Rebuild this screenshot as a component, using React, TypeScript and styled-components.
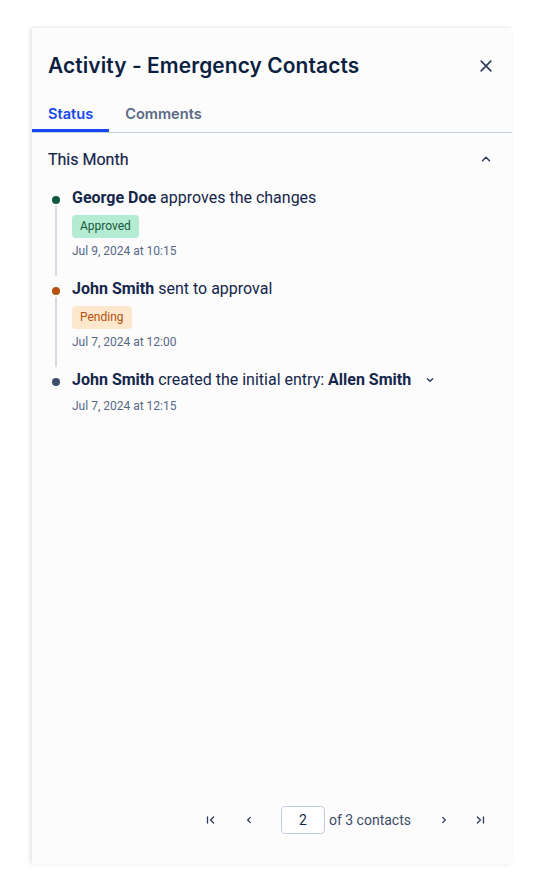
import React from "react";
import styled, { createGlobalStyle } from "styled-components";

const Global = createGlobalStyle`
  html, body { margin: 0; padding: 0; background: #ffffff; }
  body { font-family: Roboto, "Liberation Sans", sans-serif; -webkit-font-smoothing: antialiased; }
  * { box-sizing: border-box; }
`;

const Page = styled.div`
  width: 536px;
  height: 888px;
  padding: 28px 24px 24px 32px;
  background: #ffffff;
`;

const Panel = styled.aside`
  height: 100%;
  background: #fcfcfd;
  box-shadow: -2px 0 4px rgba(16, 24, 40, 0.1), 0 -1px 2px rgba(16, 24, 40, 0.04);
  display: flex;
  flex-direction: column;
`;

const Header = styled.header`
  display: flex;
  align-items: center;
  justify-content: space-between;
  padding: 16px 10px 0 16px;
  height: 60px;
`;

const Title = styled.h1`
  margin: 0;
  font-family: Inter, "Noto Sans", sans-serif;
  font-weight: 600;
  font-size: 20.9px;
  line-height: 32px;
  color: #0c1f40;
  letter-spacing: 0.1px;
`;

const IconButton = styled.button<{ $size?: number }>`
  width: ${(p) => p.$size ?? 24}px;
  height: ${(p) => p.$size ?? 24}px;
  padding: 0;
  border: none;
  background: transparent;
  color: #2b3c5a;
  display: inline-flex;
  align-items: center;
  justify-content: center;
  cursor: pointer;
  flex: none;
`;

const Tabs = styled.nav`
  display: flex;
  margin-top: 8px;
  border-bottom: 1px solid #c3cedc;
`;

const Tab = styled.button<{ $active?: boolean }>`
  height: 36px;
  padding: 0 16px;
  border: none;
  background: transparent;
  border-bottom: 3px solid ${(p) => (p.$active ? "#1747f0" : "transparent")};
  font-family: Inter, "Noto Sans", sans-serif;
  font-weight: 600;
  font-size: 14.6px;
  color: ${(p) => (p.$active ? "#1747f0" : "#5a6a84")};
  padding-top: 3px;
  cursor: pointer;
`;

const Body = styled.main`
  flex: 1;
  padding: 10px 10px 0 16px;
`;

const SectionHeader = styled.div`
  display: flex;
  align-items: center;
  justify-content: space-between;
  height: 32px;
`;

const SectionTitle = styled.h2`
  margin: 0;
  font-size: 16px;
  font-weight: 400;
  color: #14264a;
  -webkit-text-stroke: 0.2px #14264a;
`;

const Timeline = styled.ol`
  list-style: none;
  margin: 10px 0 0 0;
  padding: 0;
`;

const Item = styled.li`
  display: grid;
  grid-template-columns: 16px 1fr;
  column-gap: 8px;
`;

const Rail = styled.div`
  display: flex;
  flex-direction: column;
  align-items: center;
`;

const Dot = styled.span<{ $color: string }>`
  width: 8px;
  height: 8px;
  border-radius: 50%;
  background: ${(p) => p.$color};
  margin-top: 11px;
  flex: none;
`;

const Line = styled.span`
  width: 2px;
  flex: 1;
  background: #d6dce4;
  margin-top: 2px;
`;

const Content = styled.div<{ $last?: boolean }>`
  display: flex;
  flex-direction: column;
  align-items: flex-start;
  padding-bottom: ${(p) => (p.$last ? 0 : 17)}px;
`;

const Headline = styled.div`
  display: flex;
  align-items: center;
  min-height: 26px;
  font-size: 16px;
  line-height: 24px;
  color: #14264a;
`;

const Strong = styled.strong`
  font-weight: 700;
`;

const Badge = styled.span<{ $bg: string; $fg: string }>`
  margin-top: 4px;
  height: 23px;
  padding: 0 8px;
  border-radius: 4px;
  background: ${(p) => p.$bg};
  color: ${(p) => p.$fg};
  font-size: 12px;
  line-height: 23px;
`;

const DateText = styled.span`
  margin-top: 5px;
  font-size: 12px;
  line-height: 16px;
  color: #566785;
`;

const Footer = styled.footer`
  display: flex;
  align-items: center;
  justify-content: flex-end;
  padding: 0 14px 30px 0;
`;

const PageButton = styled.button<{ $ml?: number }>`
  width: 36px;
  height: 28px;
  margin-left: ${(p) => p.$ml ?? 0}px;
  padding: 0;
  border: none;
  background: transparent;
  color: #2b3c5a;
  display: inline-flex;
  align-items: center;
  justify-content: center;
  cursor: pointer;
`;

const PageInput = styled.input`
  width: 44px;
  height: 28px;
  margin-left: 14px;
  border: 1px solid #c3cedc;
  border-radius: 4px;
  background: #ffffff;
  text-align: center;
  font-family: Roboto, sans-serif;
  font-size: 14px;
  color: #14264a;
  outline: none;
`;

const PageLabel = styled.span`
  margin-left: 4px;
  font-size: 14px;
  color: #3b4b68;
`;

const Icon = ({ d, size = 14, sw = 1.6 }: { d: string; size?: number; sw?: number }) => (
  <svg width={size} height={size} viewBox="0 0 16 16" fill="none" stroke="currentColor" strokeWidth={sw} strokeLinecap="round" strokeLinejoin="round">
    <path d={d} />
  </svg>
);

const events = [
  {
    color: "#14573a",
    content: (
      <>
        <Strong>George Doe</Strong>&nbsp;approves the changes
      </>
    ),
    badge: { text: "Approved", bg: "#b3ecd2", fg: "#17573a" },
    date: "Jul 9, 2024 at 10:15",
  },
  {
    color: "#b4510f",
    content: (
      <>
        <Strong>John Smith</Strong>&nbsp;sent to approval
      </>
    ),
    badge: { text: "Pending", bg: "#fde7cd", fg: "#b4510f" },
    date: "Jul 7, 2024 at 12:00",
  },
  {
    color: "#3d4e6c",
    content: (
      <>
        <Strong>John Smith</Strong>&nbsp;created the initial entry:&nbsp;<Strong>Allen Smith</Strong>
      </>
    ),
    expandable: true,
    date: "Jul 7, 2024 at 12:15",
  },
];

export default function App() {
  return (
    <>
      <Global />
      <Page>
        <Panel>
          <Header>
            <Title>Activity - Emergency Contacts</Title>
            <IconButton $size={32} aria-label="Close">
              <Icon d="M2.5 2.5 L13.5 13.5 M13.5 2.5 L2.5 13.5" size={14} sw={1.9} />
            </IconButton>
          </Header>
          <Tabs>
            <Tab $active>Status</Tab>
            <Tab>Comments</Tab>
          </Tabs>
          <Body>
            <SectionHeader>
              <SectionTitle>This Month</SectionTitle>
              <IconButton $size={32} aria-label="Collapse">
                <Icon d="M4 10 L8 6 L12 10" size={14} sw={1.8} />
              </IconButton>
            </SectionHeader>
            <Timeline>
              {events.map((e, i) => {
                const last = i === events.length - 1;
                return (
                  <Item key={i}>
                    <Rail>
                      <Dot $color={e.color} />
                      {!last && <Line />}
                    </Rail>
                    <Content $last={last}>
                      <Headline>
                        {e.content}
                        {e.expandable && (
                          <IconButton $size={26} style={{ marginLeft: 6 }} aria-label="Expand">
                            <Icon d="M5 6.5 L8 9.5 L11 6.5" size={14} sw={1.6} />
                          </IconButton>
                        )}
                      </Headline>
                      {e.badge && (
                        <Badge $bg={e.badge.bg} $fg={e.badge.fg}>
                          {e.badge.text}
                        </Badge>
                      )}
                      <DateText>{e.date}</DateText>
                    </Content>
                  </Item>
                );
              })}
            </Timeline>
          </Body>
          <Footer>
            <PageButton aria-label="First page">
              <Icon d="M4 4.5 L4 11.5 M11 4.5 L7.5 8 L11 11.5" size={14} sw={1.5} />
            </PageButton>
            <PageButton $ml={2} aria-label="Previous page">
              <Icon d="M9.5 5 L6.5 8 L9.5 11" size={14} sw={1.5} />
            </PageButton>
            <PageInput defaultValue="2" />
            <PageLabel>of 3 contacts</PageLabel>
            <PageButton $ml={15} aria-label="Next page">
              <Icon d="M6.5 5 L9.5 8 L6.5 11" size={14} sw={1.5} />
            </PageButton>
            <PageButton aria-label="Last page">
              <Icon d="M5 4.5 L8.5 8 L5 11.5 M12 4.5 L12 11.5" size={14} sw={1.5} />
            </PageButton>
          </Footer>
        </Panel>
      </Page>
    </>
  );
}
